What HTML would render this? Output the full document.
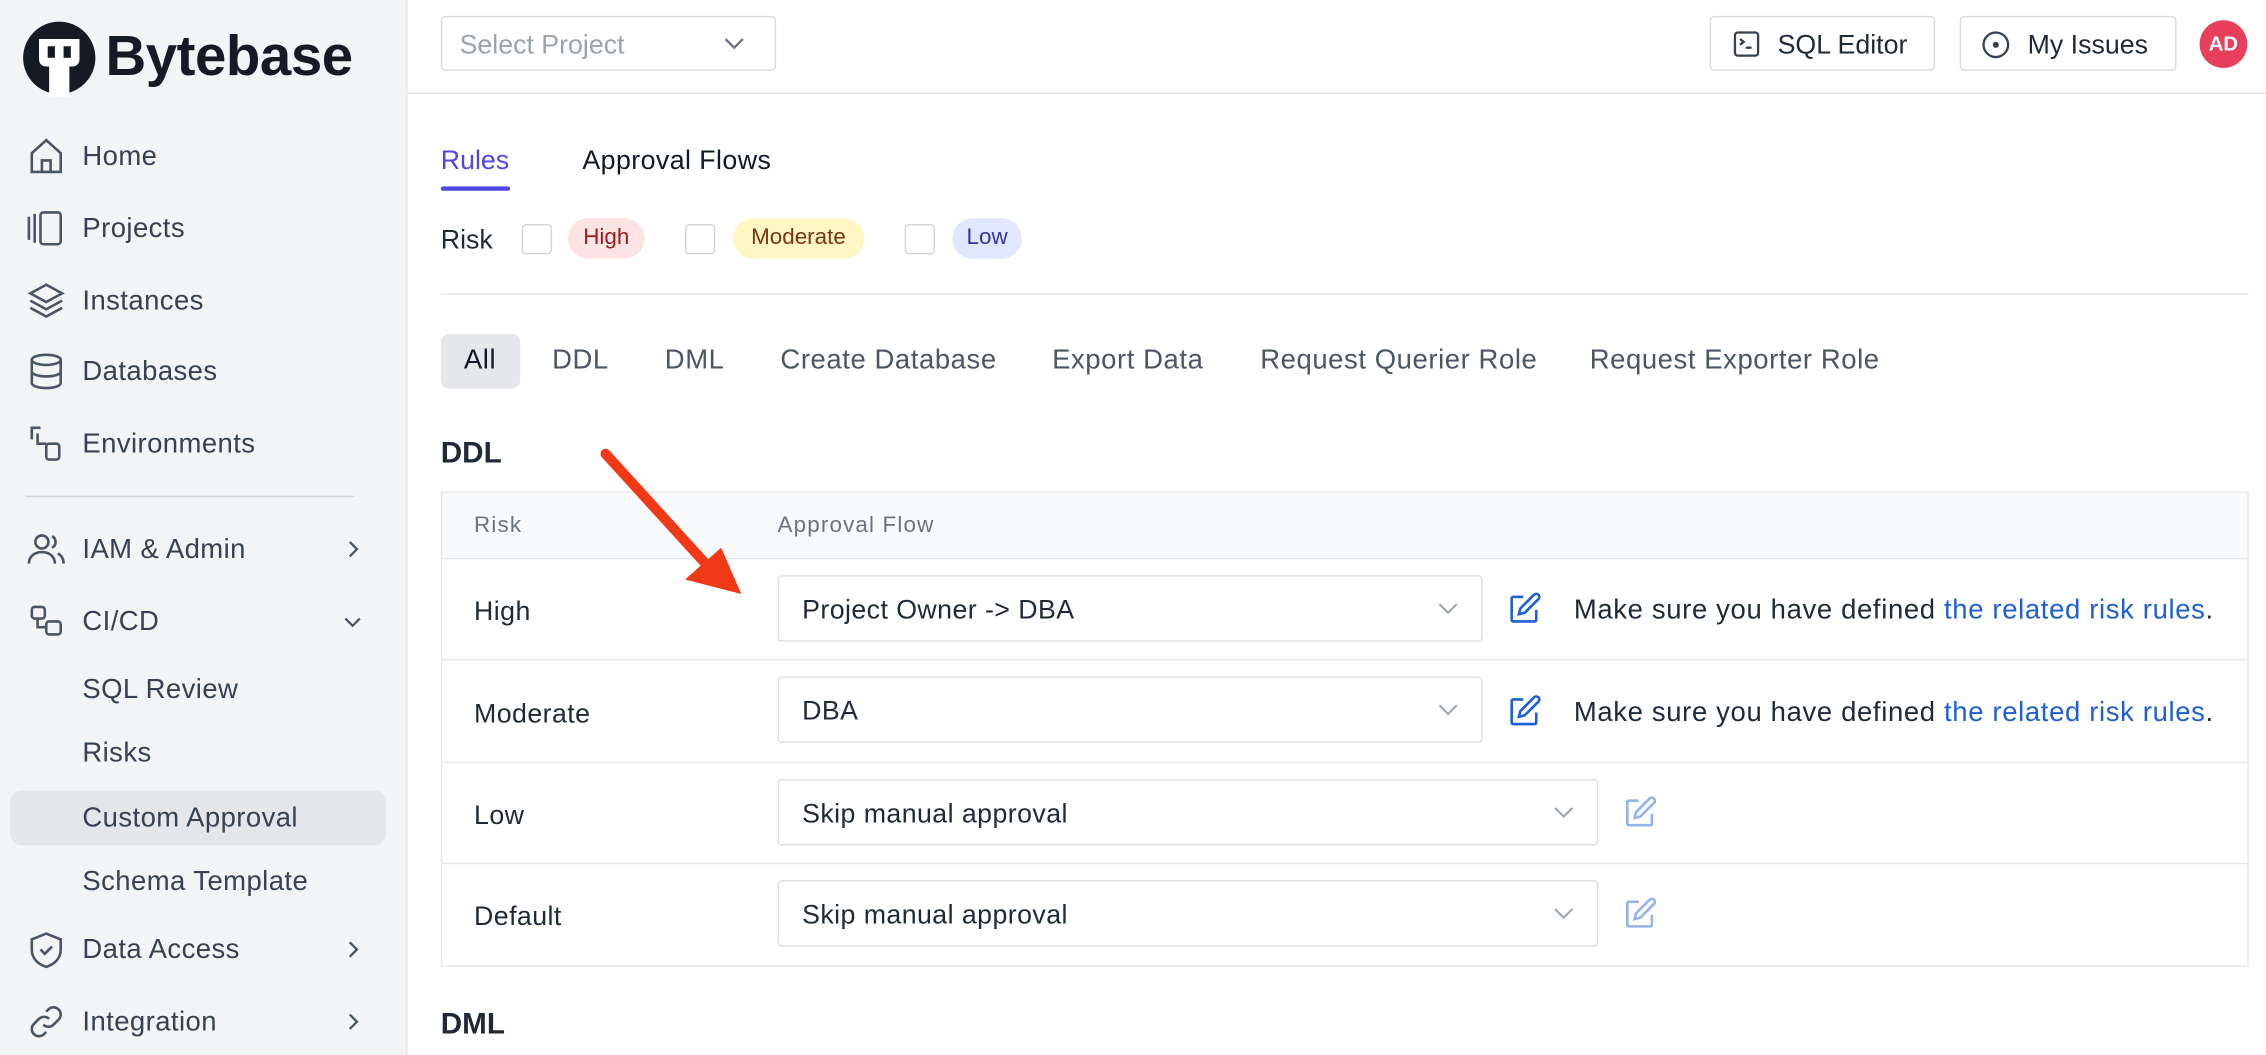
<!DOCTYPE html>
<html><head><meta charset="utf-8"><style>
*{box-sizing:border-box;margin:0;padding:0}
html,body{width:2266px;height:1054px;overflow:hidden;background:#fff}
#w{position:absolute;left:0;top:0;width:1568px;height:729.3px;transform:scale(1.4452);transform-origin:0 0;font-family:"Liberation Sans",sans-serif;color:#1f2937}
.a{position:absolute;white-space:nowrap}
#side{position:absolute;left:0;top:0;width:282px;height:730px;background:#f2f4f6;border-right:1px solid #e5e7eb}
.nav{position:absolute;left:57px;font-size:19px;letter-spacing:0.3px;color:#374151;line-height:24px}
.ic{position:absolute;left:18px;width:28px;height:28px}
.chev{position:absolute;left:236px;width:16px;height:16px}
.btn{position:absolute;border:1px solid #d9dbdf;border-radius:3px;background:#fff;font-size:18.5px;color:#1f2937}
.tag{position:absolute;height:28px;border-radius:14px;font-size:15.5px;line-height:28px;text-align:center}
.cb{position:absolute;width:21px;height:21px;border:1px solid #d1d5db;border-radius:3px;background:#fff;top:155px}
.ft{position:absolute;top:239px;font-size:19px;letter-spacing:0.4px;color:#4b5563}
.row{position:absolute;left:305px;width:1251px;border-top:1px solid #e5e7eb}
.sel{position:absolute;left:538px;height:46px;border:1px solid #dcdfe4;border-radius:3px;font-size:18.5px;letter-spacing:0.3px;line-height:46px;padding-left:16px;color:#1f2937}
.sel svg{position:absolute;right:16px;top:17px}
.rk{position:absolute;left:328px;font-size:18.5px;letter-spacing:0.3px;color:#1f2937}
.msg{position:absolute;left:1089px;font-size:19px;letter-spacing:0.45px;color:#1f2937}
.msg span{color:#1d5fd6}
</style></head><body><div id="w">
<div id="side">
<svg class="a" style="left:15px;top:15px" width="54" height="52" viewBox="0 0 54 52"><circle cx="26" cy="25" r="25" fill="#151a25"/><path d="M12 12h28v14c0 3-2 5-5 5h-2v21h-14v-21h-2c-3 0-5-2-5-5z" fill="#fff"/><rect x="18" y="17" width="5" height="8" fill="#151a25"/><rect x="29" y="17" width="5" height="8" fill="#151a25"/></svg>
<div class="a" style="left:73px;top:18px;font-size:39px;font-weight:bold;color:#151a25;letter-spacing:-0.3px">Bytebase</div>
<svg class="ic" style="top:94px" viewBox="0 0 28 28" fill="none" stroke="#4b5563" stroke-width="1.8"><path d="M4 12L14 3l10 9v13H4z"/><path d="M11 25v-8h6v8"/></svg>
<div class="nav" style="top:97px">Home</div>
<svg class="ic" style="top:144px" viewBox="0 0 28 28" fill="none" stroke="#4b5563" stroke-width="1.8"><path d="M2 6v16M6 4v20"/><rect x="10" y="3" width="14" height="22" rx="2"/></svg>
<div class="nav" style="top:147px">Projects</div>
<svg class="ic" style="top:194px" viewBox="0 0 28 28" fill="none" stroke="#4b5563" stroke-width="1.8"><path d="M14 3L3 9l11 6 11-6z"/><path d="M3 14l11 6 11-6M3 19l11 6 11-6"/></svg>
<div class="nav" style="top:197px">Instances</div>
<svg class="ic" style="top:243px" viewBox="0 0 28 28" fill="none" stroke="#4b5563" stroke-width="1.8"><ellipse cx="14" cy="6" rx="10" ry="3.5"/><path d="M4 6v16c0 2 4.5 3.5 10 3.5s10-1.5 10-3.5V6M4 14c0 2 4.5 3.5 10 3.5s10-1.5 10-3.5"/></svg>
<div class="nav" style="top:246px">Databases</div>
<svg class="ic" style="top:293px" viewBox="0 0 28 28" fill="none" stroke="#4b5563" stroke-width="1.8"><path d="M10 3H4v8M4 3"/><path d="M8 7v7h6"/><rect x="14" y="14" width="9" height="11" rx="2"/></svg>
<div class="nav" style="top:296px">Environments</div>
<div class="a" style="left:18px;top:343px;width:227px;height:1px;background:#d1d5db"></div>
<svg class="ic" style="top:366px" viewBox="0 0 28 28" fill="none" stroke="#4b5563" stroke-width="1.8"><circle cx="11" cy="9" r="4.5"/><path d="M2 24c0-5 4-8 9-8s9 3 9 8M18 5a4.5 4.5 0 010 8M22 17c2 1 4 3 4 7"/></svg>
<div class="nav" style="top:369px">IAM &amp; Admin</div>
<svg class="chev" style="top:372px" viewBox="0 0 16 16" fill="none" stroke="#4b5563" stroke-width="1.6"><path d="M6 3l5 5-5 5"/></svg>
<svg class="ic" style="top:416px" viewBox="0 0 28 28" fill="none" stroke="#4b5563" stroke-width="1.8"><rect x="4" y="4" width="9" height="8" rx="2"/><path d="M8 12v6h6"/><rect x="14" y="14" width="10" height="9" rx="2"/></svg>
<div class="nav" style="top:419px">CI/CD</div>
<svg class="chev" style="top:422px" viewBox="0 0 16 16" fill="none" stroke="#4b5563" stroke-width="1.6"><path d="M3 6l5 5 5-5"/></svg>
<div class="nav" style="top:466px">SQL Review</div>
<div class="nav" style="top:510px">Risks</div>
<div class="a" style="left:7px;top:547px;width:260px;height:38px;background:#e4e6e9;border-radius:8px"></div>
<div class="nav" style="top:555px">Custom Approval</div>
<div class="nav" style="top:599px">Schema Template</div>
<svg class="ic" style="top:643px" viewBox="0 0 28 28" fill="none" stroke="#4b5563" stroke-width="1.8"><path d="M14 3l10 4v7c0 6-4 10-10 12C8 24 4 20 4 14V7z"/><path d="M10 14l3 3 5-5"/></svg>
<div class="nav" style="top:646px">Data Access</div>
<svg class="chev" style="top:649px" viewBox="0 0 16 16" fill="none" stroke="#4b5563" stroke-width="1.6"><path d="M6 3l5 5-5 5"/></svg>
<svg class="ic" style="top:693px" viewBox="0 0 28 28" fill="none" stroke="#4b5563" stroke-width="1.8"><path d="M12 16a5 5 0 007 0l4-4a5 5 0 00-7-7l-2 2"/><path d="M16 12a5 5 0 00-7 0l-4 4a5 5 0 007 7l2-2"/></svg>
<div class="nav" style="top:696px">Integration</div>
<svg class="chev" style="top:699px" viewBox="0 0 16 16" fill="none" stroke="#4b5563" stroke-width="1.6"><path d="M6 3l5 5-5 5"/></svg>
</div>
<div class="a" style="left:282px;top:64px;width:1286px;height:1px;background:#e5e7eb"></div>
<div class="btn" style="left:305px;top:11px;width:232px;height:38px"><span class="a" style="left:12px;top:8px;color:#9ca3af">Select Project</span><svg class="a" style="left:194px;top:11px" width="16" height="14" viewBox="0 0 16 14" fill="none" stroke="#6b7280" stroke-width="1.6"><path d="M2 4l6 6 6-6"/></svg></div>
<div class="btn" style="left:1183px;top:11px;width:156px;height:38px"><svg class="a" style="left:15px;top:9px" width="19" height="19" viewBox="0 0 19 19" fill="none" stroke="#374151" stroke-width="1.6"><rect x="1.5" y="1.5" width="16" height="16" rx="2"/><path d="M5 6l2.5 2L5 10M9 12h4"/></svg><span class="a" style="left:46px;top:8px">SQL Editor</span></div>
<div class="btn" style="left:1356px;top:11px;width:150px;height:38px"><svg class="a" style="left:14px;top:9px" width="20" height="20" viewBox="0 0 20 20" fill="none" stroke="#374151" stroke-width="1.6"><circle cx="10" cy="10" r="8.5"/><circle cx="10" cy="10" r="1.3" fill="#374151"/></svg><span class="a" style="left:46px;top:8px">My Issues</span></div>
<div class="a" style="left:1522px;top:14px;width:33px;height:33px;border-radius:50%;background:#e8405a;color:#fff;font-size:14px;font-weight:bold;line-height:33px;text-align:center">AD</div>
<div class="a" style="left:305px;top:100px;font-size:18.5px;color:#4f46e5">Rules</div>
<div class="a" style="left:305px;top:129px;width:48px;height:3px;background:#4f46e5;border-radius:2px"></div>
<div class="a" style="left:403px;top:100px;font-size:18.5px;letter-spacing:0.3px;color:#111827">Approval Flows</div>
<div class="a" style="left:305px;top:155px;font-size:18.5px;color:#1f2937">Risk</div>
<div class="cb" style="left:361px"></div>
<div class="tag" style="left:393px;top:151px;width:53px;background:#fde4e4;color:#991b1b">High</div>
<div class="cb" style="left:474px"></div>
<div class="tag" style="left:507px;top:151px;width:91px;background:#fef7c3;color:#78350f">Moderate</div>
<div class="cb" style="left:626px"></div>
<div class="tag" style="left:659px;top:151px;width:48px;background:#e0e7ff;color:#3730a3">Low</div>
<div class="a" style="left:305px;top:203px;width:1251px;height:1px;background:#e5e7eb"></div>
<div class="a" style="left:305px;top:231px;width:55px;height:38px;background:#e5e7eb;border-radius:6px"></div>
<div class="ft" style="left:321px;color:#111827">All</div>
<div class="ft" style="left:382px">DDL</div>
<div class="ft" style="left:460px">DML</div>
<div class="ft" style="left:540px">Create Database</div>
<div class="ft" style="left:728px">Export Data</div>
<div class="ft" style="left:872px">Request Querier Role</div>
<div class="ft" style="left:1100px">Request Exporter Role</div>
<div class="a" style="left:305px;top:302px;font-size:20.5px;font-weight:bold;color:#1f2937">DDL</div>
<div class="a" style="left:305px;top:340px;width:1251px;height:329px;border:1px solid #e5e7eb"></div>
<div class="a" style="left:306px;top:341px;width:1249px;height:45px;background:#f9fafb"></div>
<div class="a" style="left:328px;top:355px;font-size:15.5px;color:#6b7280;letter-spacing:0.8px">Risk</div>
<div class="a" style="left:538px;top:355px;font-size:15.5px;color:#6b7280;letter-spacing:0.8px">Approval Flow</div>
<div class="row" style="top:386px"></div><div class="row" style="top:456px"></div><div class="row" style="top:527px"></div><div class="row" style="top:597px"></div>
<div class="rk" style="top:412px">High</div>
<div class="rk" style="top:483px">Moderate</div>
<div class="rk" style="top:553px">Low</div>
<div class="rk" style="top:623px">Default</div>
<div class="sel" style="top:398px;width:488px">Project Owner -&gt; DBA<svg width="14" height="10" viewBox="0 0 14 10" fill="none" stroke="#9ca3af" stroke-width="1.4"><path d="M1 2l6 6 6-6"/></svg></div>
<div class="sel" style="top:468px;width:488px">DBA<svg width="14" height="10" viewBox="0 0 14 10" fill="none" stroke="#9ca3af" stroke-width="1.4"><path d="M1 2l6 6 6-6"/></svg></div>
<div class="sel" style="top:539px;width:568px">Skip manual approval<svg width="14" height="10" viewBox="0 0 14 10" fill="none" stroke="#9ca3af" stroke-width="1.4"><path d="M1 2l6 6 6-6"/></svg></div>
<div class="sel" style="top:609px;width:568px">Skip manual approval<svg width="14" height="10" viewBox="0 0 14 10" fill="none" stroke="#9ca3af" stroke-width="1.4"><path d="M1 2l6 6 6-6"/></svg></div>
<svg class="a" style="left:1043px;top:409px" width="24" height="24" viewBox="0 0 24 24" fill="none" stroke="#1d5fd6" stroke-width="1.8"><path d="M11 4H4a1 1 0 00-1 1v15a1 1 0 001 1h15a1 1 0 001-1v-7"/><path d="M18.5 2.5a2.1 2.1 0 013 3L12 15l-4 1 1-4z"/></svg>
<svg class="a" style="left:1043px;top:480px" width="24" height="24" viewBox="0 0 24 24" fill="none" stroke="#1d5fd6" stroke-width="1.8"><path d="M11 4H4a1 1 0 00-1 1v15a1 1 0 001 1h15a1 1 0 001-1v-7"/><path d="M18.5 2.5a2.1 2.1 0 013 3L12 15l-4 1 1-4z"/></svg>
<svg class="a" style="left:1123px;top:550px" width="24" height="24" viewBox="0 0 24 24" fill="none" stroke="#93b4ea" stroke-width="1.8"><path d="M11 4H4a1 1 0 00-1 1v15a1 1 0 001 1h15a1 1 0 001-1v-7"/><path d="M18.5 2.5a2.1 2.1 0 013 3L12 15l-4 1 1-4z"/></svg>
<svg class="a" style="left:1123px;top:620px" width="24" height="24" viewBox="0 0 24 24" fill="none" stroke="#93b4ea" stroke-width="1.8"><path d="M11 4H4a1 1 0 00-1 1v15a1 1 0 001 1h15a1 1 0 001-1v-7"/><path d="M18.5 2.5a2.1 2.1 0 013 3L12 15l-4 1 1-4z"/></svg>
<div class="msg" style="top:412px">Make sure you have defined <span>the related risk rules</span>.</div>
<div class="msg" style="top:483px">Make sure you have defined <span>the related risk rules</span>.</div>
<div class="a" style="left:305px;top:697px;font-size:20.5px;font-weight:bold;color:#1f2937">DML</div>
<svg class="a" style="left:400px;top:300px" width="130" height="120" viewBox="0 0 130 120"><path d="M19 14L90 92" stroke="#f03a17" stroke-width="7" stroke-linecap="round"/><path d="M113 111L74 101 99 79z" fill="#f03a17"/></svg>
</div></body></html>
